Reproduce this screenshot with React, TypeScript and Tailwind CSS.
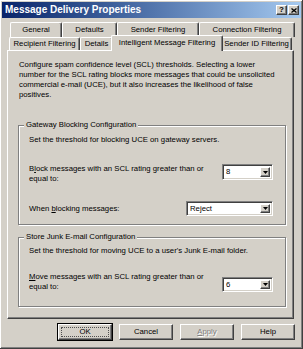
import React from "react";

const raised =
  "bg-[#d4d0c8] border border-t-white border-l-white border-r-[#404040] border-b-[#404040] shadow-[inset_-1px_-1px_0_#808080]";
const sunken =
  "bg-white border border-t-[#808080] border-l-[#808080] border-r-white border-b-white shadow-[inset_1px_1px_0_#404040,inset_-1px_-1px_0_#d4d0c8]";

const backTabs = [
  { label: "General", w: "w-[52px]" },
  { label: "Defaults", w: "w-[55px]" },
  { label: "Sender Filtering", w: "w-[82px]" },
  { label: "Connection Filtering", w: "w-[96px]" },
];

const frontTabs = [
  { label: "Recipient Filtering", w: "w-[71px]" },
  { label: "Details", w: "w-[33px]" },
  { label: "Intelligent Message Filtering", w: "w-[112px]", selected: true },
  { label: "Sender ID Filtering", w: "w-[71px]" },
];

function Tab({ label, w, selected }: { label: string; w: string; selected?: boolean }) {
  return (
    <div
      className={`${w} flex items-center justify-center whitespace-nowrap rounded-t-[2px] border-l border-t border-r border-l-white border-t-white border-r-[#404040] shadow-[inset_-1px_0_0_#808080] bg-[#d4d0c8] ${
        selected ? "relative z-10 -mx-[2px] -mt-[2px] h-[16px] -mb-[1px] pb-[1px]" : "h-full"
      }`}
    >
      {label}
    </div>
  );
}

function Combo({ value, w, h }: { value: string; w: string; h: string }) {
  return (
    <div className={`${sunken} ${w} ${h} flex items-stretch p-[2px] shrink-0`}>
      <div className="flex-1 pl-[1px] leading-[10px] flex items-center">{value}</div>
      <div className={`${raised} w-[10px] flex items-center justify-center`}>
        <svg width="5" height="3" viewBox="0 0 5 3">
          <path d="M0 0h5L2.5 3z" fill="#000" />
        </svg>
      </div>
    </div>
  );
}

function Group({ title, children, className }: { title: string; children: React.ReactNode; className: string }) {
  return (
    <fieldset
      className={`border border-[#808080] shadow-[inset_1px_1px_0_#fff,1px_1px_0_#fff] ${className}`}
    >
      <legend className="ml-[5px] px-[2px] leading-[10px] bg-[#d4d0c8]">{title}</legend>
      {children}
    </fieldset>
  );
}

function Button({ children, disabled, isDefault }: { children: React.ReactNode; disabled?: boolean; isDefault?: boolean }) {
  return (
    <div
      className={`w-[54px] h-[16px] flex items-center justify-center ${raised} ${
        isDefault ? "outline outline-1 outline-black p-[2px]" : ""
      } ${disabled ? "text-[#808080] [text-shadow:1px_1px_0_#fff]" : ""}`}
    >
      {isDefault ? (
        <div className="w-full h-full flex items-center justify-center border border-dotted border-[#505050]">
          {children}
        </div>
      ) : (
        children
      )}
    </div>
  );
}

export default function App() {
  return (
    <div className="w-[303px] h-[349px] bg-[#d4d0c8] p-[2px] flex flex-col text-black text-[7.75px] leading-[10px] font-['Liberation_Sans',Arial,sans-serif] shadow-[inset_-1px_-1px_0_#404040,inset_1px_1px_0_#fff,inset_-2px_-2px_0_#808080]">
      {/* title bar */}
      <div className="h-[16px] flex items-center bg-linear-to-r from-[#0a246a] to-[#a6caf0] pl-[3px] pr-[2px]">
        <span className="text-white font-bold text-[10px] flex-1 leading-none">Message Delivery Properties</span>
        <div className="flex gap-[1px]">
          <div className={`${raised} w-[11px] h-[10px] flex items-center justify-center font-bold text-[8px] leading-none`}>
            ?
          </div>
          <div className={`${raised} w-[11px] h-[10px] flex items-center justify-center`}>
            <svg width="6" height="5" viewBox="0 0 6 5">
              <path d="M0.5 0.5l5 4M5.5 0.5l-5 4" stroke="#000" strokeWidth="1.3" />
            </svg>
          </div>
        </div>
      </div>

      {/* tabs */}
      <div className="mt-[4px] h-[15px] flex pl-[8px]">
        {backTabs.map((t) => (
          <Tab key={t.label} label={t.label} w={t.w} />
        ))}
      </div>
      <div className="h-[13px] flex items-start pl-[7px]">
        {frontTabs.map((t) => (
          <Tab key={t.label} label={t.label} w={t.w} selected={t.selected} />
        ))}
      </div>

      {/* page */}
      <div className="ml-[5px] w-[287px] h-[269px] border border-t-white border-l-white border-r-[#404040] border-b-[#404040] shadow-[inset_-1px_-1px_0_#808080] pt-[9px] pl-[10px]">
        <p className="pl-[1px]">
          Configure spam confidence level (SCL) thresholds. Selecting a lower
          <br />
          number for the SCL rating blocks more messages that could be unsolicited
          <br />
          commercial e-mail (UCE), but it also increases the likelihood of false
          <br />
          positives.
        </p>

        <Group title="Gateway Blocking Configuration" className="mt-[20px] w-[268px] h-[105px]">
          <div className="pl-[10px] pr-[12px] pt-[5px]">
            <div>Set the threshold for blocking UCE on gateway servers.</div>
            <div className="mt-[19px] flex justify-between items-start">
              <div>
                B<u>l</u>ock messages with an SCL rating greater than or
                <br />
                equal to:
              </div>
              <Combo value="8" w="w-[51px]" h="h-[16px]" />
            </div>
            <div className="mt-[17px] flex justify-between items-center">
              <div>
                When <u>b</u>locking messages:
              </div>
              <Combo value="Reject" w="w-[87px]" h="h-[15px]" />
            </div>
          </div>
        </Group>

        <Group title="Store Junk E-mail Configuration" className="mt-[7px] w-[268px] h-[75px]">
          <div className="pl-[10px] pr-[12px] pt-[4px]">
            <div>Set the threshold for moving UCE to a user's Junk E-mail folder.</div>
            <div className="mt-[16px] flex justify-between items-start">
              <div>
                <u>M</u>ove messages with an SCL rating greater than or
                <br />
                equal to:
              </div>
              <div className="mt-[5px]">
                <Combo value="6" w="w-[51px]" h="h-[15px]" />
              </div>
            </div>
          </div>
        </Group>
      </div>

      {/* buttons */}
      <div className="mt-[5px] flex gap-[7px] pl-[56px]">
        <Button isDefault>OK</Button>
        <Button>Cancel</Button>
        <Button disabled>
          <u>A</u>pply
        </Button>
        <Button>Help</Button>
      </div>
    </div>
  );
}
